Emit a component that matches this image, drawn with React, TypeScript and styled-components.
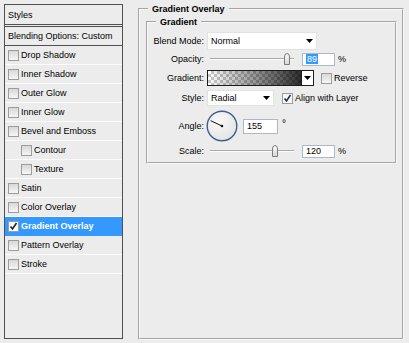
import React from 'react'
import styled, { createGlobalStyle } from 'styled-components'

const GlobalStyle = createGlobalStyle`
  html, body {
    margin: 0;
    padding: 0;
    background: #ececec;
  }
  body {
    font-family: "Liberation Sans", Arial, sans-serif;
    font-size: 9px;
    color: #000;
  }
`

const Page = styled.div`
  display: flex;
  align-items: flex-start;
  width: 409px;
  height: 343px;
  background: #ececec;
  overflow: hidden;
`

/* left list of layer styles */
const StylesList = styled.div`
  margin: 4px 0 0 4px;
  width: 119px;
  height: 335px;
  box-sizing: border-box;
  border: 1px solid #505050;
  display: flex;
  flex-direction: column;
`
const ListHeader = styled.div`
  height: 19px;
  display: flex;
  align-items: center;
  padding-left: 3px;
  border-bottom: 3px double #505050;
`
const BlendRow = styled.div`
  height: 18px;
  display: flex;
  align-items: center;
  padding-left: 3px;
  border-bottom: 1px solid #505050;
`
const ListItem = styled.div<{ $indent?: boolean; $active?: boolean }>`
  height: 18px;
  display: flex;
  align-items: center;
  gap: 2px;
  padding-left: ${p => (p.$indent ? 16 : 3)}px;
  border-bottom: 1px solid ${p => (p.$active ? '#3399ff' : '#fbfbfb')};
  background: ${p => (p.$active ? '#3399ff' : 'transparent')};
  color: ${p => (p.$active ? '#fff' : '#000')};
  font-weight: ${p => (p.$active ? 'bold' : 'normal')};
`

const Box = styled.span<{ $checked?: boolean }>`
  width: 11px;
  height: 11px;
  flex: none;
  box-sizing: border-box;
  border: 1px solid #9c9c9c;
  background: ${p => (p.$checked ? 'linear-gradient(#f4f4f4, #ffffff)' : 'linear-gradient(#d8d8d8, #f6f6f6)')};
  display: flex;
  align-items: center;
  justify-content: center;
`

const Check = ({ checked, color = '#1e2f5a' }: { checked?: boolean; color?: string }) => (
  <Box $checked={checked}>
    {checked && (
      <svg width="9" height="9" viewBox="0 0 9 9">
        <path d="M1.5 4.5 L3.5 7 L7.5 1" fill="none" stroke={color} strokeWidth="1.6" />
      </svg>
    )}
  </Box>
)

/* right settings panel */
const Group = styled.fieldset`
  margin: 2px 0 0 15px;
  width: 266px;
  height: 338px;
  box-sizing: border-box;
  min-width: 0;
  padding: 0 5px 0 6px;
  border: 2px groove #f8f8f8;
`
const GroupTitle = styled.legend`
  margin-left: 2px;
  padding: 0 4px;
  font-weight: bold;
  line-height: 14px;
`
const SubGroup = styled.fieldset`
  margin: -1px 0 0 0;
  min-width: 0;
  padding: 3px 0 4px 0;
  border: 2px groove #f8f8f8;
`
const SubTitle = styled.legend`
  margin-left: 8px;
  padding: 0 4px;
  font-weight: bold;
  line-height: 14px;
`
const Form = styled.div`
  display: grid;
  grid-template-columns: 56px 1fr;
  grid-template-rows: 18px 18px 20px 20px 36px 14px;
  column-gap: 3px;
  align-items: center;
`
const Label = styled.div`
  text-align: right;
  white-space: nowrap;
`
const Controls = styled.div`
  display: flex;
  align-items: center;
  height: 100%;
`
const Select = styled.div<{ $w: number; $h: number }>`
  width: ${p => p.$w}px;
  height: ${p => p.$h}px;
  box-sizing: border-box;
  background: #fff;
  border: 1px solid #e2e2e2;
  display: flex;
  align-items: center;
  justify-content: space-between;
  padding: 0 3px 0 3px;
`
const Arrow = () => (
  <svg width="7" height="4" viewBox="0 0 7 4">
    <path d="M0 0 H7 L3.5 4 Z" fill="#000" />
  </svg>
)
const SliderTrack = styled.div`
  position: relative;
  width: 84px;
  height: 12px;
  margin-left: 3px;
  &::before {
    content: '';
    position: absolute;
    left: 0;
    right: 0;
    top: 5px;
    border-top: 1px solid #a8a8a8;
    border-bottom: 1px solid #fff;
  }
`
const Thumb = styled.svg<{ $left: number }>`
  position: absolute;
  top: 0;
  left: ${p => p.$left}px;
`
const NumberField = styled.div<{ $w: number; $h: number; $gap: number }>`
  width: ${p => p.$w}px;
  height: ${p => p.$h}px;
  margin-left: ${p => p.$gap}px;
  box-sizing: border-box;
  border: 1px solid #a9b8cc;
  background: #fff;
  padding-left: 3px;
  display: flex;
  align-items: center;
`
const Selected = styled.span`
  background: #3399ff;
  color: #fff;
  padding: 0 1px;
`
const Unit = styled.span<{ $raised?: boolean }>`
  margin-left: ${p => (p.$raised ? 4 : 3)}px;
  align-self: ${p => (p.$raised ? 'flex-start' : 'center')};
  margin-top: ${p => (p.$raised ? 10 : 0)}px;
  font-size: ${p => (p.$raised ? 10 : 9)}px;
`
const Swatch = styled.div`
  width: 95px;
  height: 16px;
  box-sizing: border-box;
  border: 1px solid #1c1c1c;
  background:
    linear-gradient(to right, rgba(0, 0, 0, 0), rgba(0, 0, 0, 0.82)),
    repeating-conic-gradient(#c9c9c9 0% 25%, #ffffff 0% 50%) 0 0 / 6px 6px;
`
const SwatchButton = styled.div`
  width: 12px;
  height: 16px;
  box-sizing: border-box;
  border: 1px solid #1c1c1c;
  border-left: none;
  background: #fff;
  display: flex;
  align-items: center;
  justify-content: center;
`
const Option = styled.label<{ $gap: number }>`
  display: flex;
  align-items: center;
  gap: 2px;
  margin-left: ${p => p.$gap}px;
`
const Dial = styled.svg`
  margin-left: -1px;
  flex: none;
`

const Slider = ({ pos }: { pos: number }) => (
  <SliderTrack>
    <Thumb $left={pos} width="8" height="12" viewBox="0 0 8 12">
      <defs>
        <linearGradient id="tg" x1="0" y1="0" x2="0" y2="1">
          <stop offset="0" stopColor="#ffffff" />
          <stop offset="1" stopColor="#d6d6d6" />
        </linearGradient>
      </defs>
      <path d="M1.5 11.5 V4 Q1.5 0.5 4 0.5 Q6.5 0.5 6.5 4 V11.5 Z" fill="url(#tg)" stroke="#7c7c7c" />
    </Thumb>
  </SliderTrack>
)

const items = [
  { name: 'Drop Shadow' },
  { name: 'Inner Shadow' },
  { name: 'Outer Glow' },
  { name: 'Inner Glow' },
  { name: 'Bevel and Emboss' },
  { name: 'Contour', indent: true },
  { name: 'Texture', indent: true },
  { name: 'Satin' },
  { name: 'Color Overlay' },
  { name: 'Gradient Overlay', active: true },
  { name: 'Pattern Overlay' },
  { name: 'Stroke' },
]

const App = () => {
  const angle = 155
  const rad = (angle * Math.PI) / 180
  const ex = 16 + Math.cos(rad) * 12.5
  const ey = 16 - Math.sin(rad) * 12.5

  return (
    <Page>
      <GlobalStyle />
      <StylesList>
        <ListHeader>Styles</ListHeader>
        <BlendRow>Blending Options: Custom</BlendRow>
        {items.map(it => (
          <ListItem key={it.name} $indent={it.indent} $active={it.active}>
            <Check checked={it.active} color="#222" />
            {it.name}
          </ListItem>
        ))}
      </StylesList>

      <Group>
        <GroupTitle>Gradient Overlay</GroupTitle>
        <SubGroup>
          <SubTitle>Gradient</SubTitle>
          <Form>
            <Label>Blend Mode:</Label>
            <Controls>
              <Select $w={110} $h={18}>
                Normal
                <Arrow />
              </Select>
            </Controls>

            <Label>Opacity:</Label>
            <Controls>
              <Slider pos={73} />
              <NumberField $w={33} $h={13} $gap={8}>
                <Selected>89</Selected>
              </NumberField>
              <Unit>%</Unit>
            </Controls>

            <Label>Gradient:</Label>
            <Controls>
              <Swatch />
              <SwatchButton>
                <Arrow />
              </SwatchButton>
              <Option $gap={7}>
                <Check />
                Reverse
              </Option>
            </Controls>

            <Label>Style:</Label>
            <Controls>
              <Select $w={67} $h={16}>
                Radial
                <Arrow />
              </Select>
              <Option $gap={8}>
                <Check checked />
                Align with Layer
              </Option>
            </Controls>

            <Label>Angle:</Label>
            <Controls>
              <Dial width="32" height="32" viewBox="0 0 32 32">
                <defs>
                  <radialGradient id="dg" cx="0.4" cy="0.35" r="0.7">
                    <stop offset="0" stopColor="#fafafa" />
                    <stop offset="1" stopColor="#e2e2e2" />
                  </radialGradient>
                </defs>
                <circle cx="16" cy="16" r="14.8" fill="url(#dg)" stroke="#3f5f8a" strokeWidth="1.4" />
                <line x1="16" y1="16" x2={ex} y2={ey} stroke="#111" strokeWidth="1" />
                <circle cx="16" cy="16" r="1.3" fill="#111" />
              </Dial>
              <NumberField $w={35} $h={15} $gap={5}>
                155
              </NumberField>
              <Unit $raised>°</Unit>
            </Controls>

            <Label>Scale:</Label>
            <Controls>
              <Slider pos={61} />
              <NumberField $w={33} $h={13} $gap={8}>
                120
              </NumberField>
              <Unit>%</Unit>
            </Controls>
          </Form>
        </SubGroup>
      </Group>
    </Page>
  )
}

export default App
